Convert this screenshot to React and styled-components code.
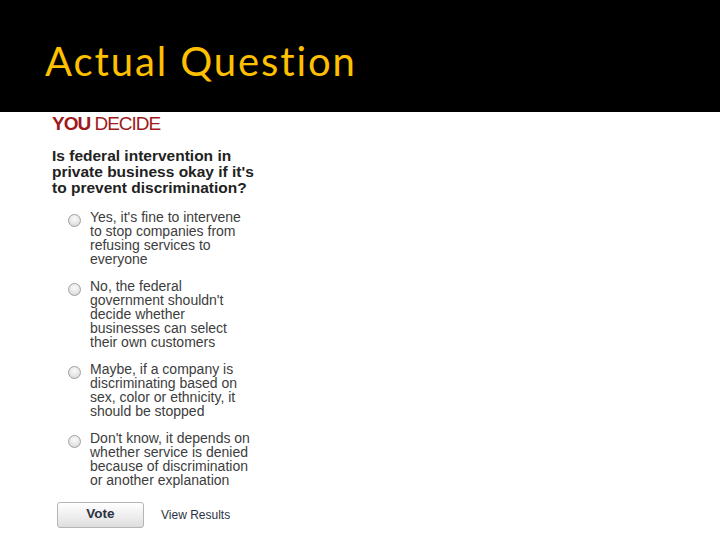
import styled, { createGlobalStyle } from "styled-components";

const Global = createGlobalStyle`
  html, body {
    margin: 0;
    padding: 0;
    background: #fff;
  }
`;

const Page = styled.div`
  width: 720px;
  height: 540px;
  overflow: hidden;
  background: #fff;
`;

const Header = styled.header`
  background: #000;
  height: 112px;
  display: flex;
  align-items: center;
  padding: 10px 0 0 45px;
  box-sizing: border-box;
`;

const Title = styled.h1`
  margin: 0;
  font-family: Lato, "Open Sans", sans-serif;
  font-weight: 400;
  font-size: 40px;
  letter-spacing: 1.9px;
  font-variant-ligatures: none;
  color: #ffc000;
`;

const Poll = styled.div`
  padding: 1px 0 0 52px;
  font-family: "Liberation Sans", Arial, sans-serif;
`;

const Brand = styled.div`
  font-size: 19px;
  line-height: 22px;
  color: #9e1a1d;
  letter-spacing: -1px;
  b {
    font-weight: 700;
  }
`;

const Question = styled.h2`
  margin: 13px 0 14px;
  width: 212px;
  font-size: 15.5px;
  line-height: 16px;
  font-weight: 700;
  color: #222;
`;

const Options = styled.div`
  display: flex;
  flex-direction: column;
  gap: 13px;
  padding-left: 16px;
`;

const Option = styled.label`
  display: flex;
  align-items: flex-start;
  gap: 9px;
`;

const Radio = styled.span`
  flex: none;
  width: 11px;
  height: 11px;
  margin-top: 4px;
  border-radius: 50%;
  border: 1px solid #a0a0a0;
  background: radial-gradient(circle at 50% 35%, #fafafa 0%, #e6e6e6 55%, #cccccc 100%);
`;

const OptionText = styled.span`
  width: 162px;
  font-size: 14px;
  line-height: 14px;
  color: #3d3d3d;
`;

const Actions = styled.div`
  display: flex;
  align-items: center;
  gap: 17px;
  margin: 15px 0 0 5px;
`;

const VoteButton = styled.button`
  width: 87px;
  height: 26px;
  border: 1px solid #b5b5b5;
  border-radius: 3px;
  background: linear-gradient(#ffffff, #ececec 60%, #dedede);
  font-family: "Liberation Sans", Arial, sans-serif;
  font-weight: 700;
  font-size: 13.5px;
  color: #2a3240;
  padding: 0 0 4px;
`;

const ResultsLink = styled.span`
  font-size: 12px;
  color: #2c3344;
`;

const answers = [
  "Yes, it's fine to intervene to stop companies from refusing services to everyone",
  "No, the federal government shouldn't decide whether businesses can select their own customers",
  "Maybe, if a company is discriminating based on sex, color or ethnicity, it should be stopped",
  "Don't know, it depends on whether service is denied because of discrimination or another explanation",
];

export default function App() {
  return (
    <Page>
      <Global />
      <Header>
        <Title>Actual Question</Title>
      </Header>
      <Poll>
        <Brand>
          <b>YOU</b> DECIDE
        </Brand>
        <Question>
          Is federal intervention in private business okay if it's to prevent
          discrimination?
        </Question>
        <Options>
          {answers.map((a) => (
            <Option key={a}>
              <Radio />
              <OptionText>{a}</OptionText>
            </Option>
          ))}
        </Options>
        <Actions>
          <VoteButton>Vote</VoteButton>
          <ResultsLink>View Results</ResultsLink>
        </Actions>
      </Poll>
    </Page>
  );
}
